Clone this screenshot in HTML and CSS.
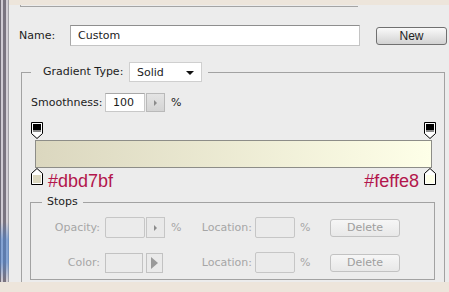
FILE: index.html
```html
<!DOCTYPE html>
<html lang="en">
<head>
  <meta charset="UTF-8">
  <title>Gradient Editor</title>
  <link rel="stylesheet" href="styles.css">
</head>
<body>
  <div class="window">
    <div class="strip"></div>
    <div class="panel">
      <div class="prev-group"></div>

      <div class="name-row">
        <label class="name-label">Name:</label>
        <input class="name-input" type="text" value="Custom">
        <button class="btn btn-new" type="button">New</button>
      </div>

      <fieldset class="group gradient-group">
        <legend class="type-legend">
          <span class="type-label">Gradient Type:</span>
          <div class="select">Solid<span class="caret"></span></div>
        </legend>

        <div class="smooth-row">
          <span class="smooth-label">Smoothness:</span>
          <input class="field" type="text" value="100">
          <span class="spin"><span class="spin-arrow"></span></span>
          <span class="pct">%</span>
        </div>

        <div class="editor">
          <div class="stops-top">
            <svg class="marker" width="12" height="17" viewBox="0 0 12 17">
              <path d="M0.5 0.5H11.5V11.5L6 16.5L0.5 11.5Z" fill="#fff" stroke="#000"/>
              <rect x="2" y="2" width="8" height="6" fill="#000"/>
              <rect x="2" y="8" width="8" height="2" fill="#8a8a8a"/>
            </svg>
            <svg class="marker" width="12" height="17" viewBox="0 0 12 17">
              <path d="M0.5 0.5H11.5V11.5L6 16.5L0.5 11.5Z" fill="#fff" stroke="#000"/>
              <rect x="2" y="2" width="8" height="6" fill="#000"/>
              <rect x="2" y="8" width="8" height="2" fill="#8a8a8a"/>
            </svg>
          </div>
          <div class="bar"></div>
          <div class="stops-bottom">
            <svg class="marker" width="12" height="17" viewBox="0 0 12 17">
              <path d="M6 0.5L11.5 5.5V16.5H0.5V5.5Z" fill="#fff" stroke="#000"/>
              <rect x="2" y="7" width="8" height="8" fill="#dbd7bf"/>
            </svg>
            <span class="hex">#dbd7bf</span>
            <span class="hex hex-right">#feffe8</span>
            <svg class="marker" width="12" height="17" viewBox="0 0 12 17">
              <path d="M6 0.5L11.5 5.5V16.5H0.5V5.5Z" fill="#fff" stroke="#000"/>
              <rect x="2" y="7" width="8" height="8" fill="#feffe8"/>
            </svg>
          </div>
        </div>

        <fieldset class="group stops-group">
          <legend class="stops-legend">Stops</legend>
          <div class="stop-row">
            <span class="off-label">Opacity:</span>
            <span class="combo">
              <span class="field off-field"></span>
              <span class="spin off-spin"><span class="spin-arrow"></span></span>
            </span>
            <span class="off-pct">%</span>
            <span class="off-label loc-label">Location:</span>
            <span class="field off-field"></span>
            <span class="off-pct">%</span>
            <span class="btn btn-off">Delete</span>
          </div>
          <div class="stop-row">
            <span class="off-label">Color:</span>
            <span class="combo">
              <span class="swatch"></span>
              <span class="color-arrow"><span class="arrow-tri"></span></span>
            </span>
            <span></span>
            <span class="off-label loc-label">Location:</span>
            <span class="field off-field"></span>
            <span class="off-pct">%</span>
            <span class="btn btn-off">Delete</span>
          </div>
        </fieldset>
      </fieldset>
    </div>
  </div>
</body>
</html>
```

FILE: styles.css
```css
* {
  margin: 0;
  padding: 0;
  box-sizing: border-box;
}

body {
  background-color: #ede5db;
  font-family: 'DejaVu Sans', sans-serif;
  font-size: 11px;
  line-height: 14px;
  color: #1c1c1c;
  overflow: hidden;
}

.window {
  display: flex;
  height: 282px;
}

.strip {
  width: 9px;
  background:
    linear-gradient(to bottom, transparent 0 222px, rgba(70, 130, 210, 0.55) 240px, rgba(70, 130, 210, 0.55) 262px, transparent 280px),
    linear-gradient(to right, #6f6a75 0 1px, #cfcad3 1px 3px, #7a7480 3px 6px, #d3cfd6 6px 8px, #a2a0a6 8px 9px);
}

.panel {
  flex: 1;
  margin-top: 5px;
  background-color: #ececec;
  overflow: hidden;
}

.prev-group {
  margin-left: 11px;
  width: 338px;
  height: 2px;
  border-bottom: 1px solid #a4a4a4;
  border-left: 1px solid #a4a4a4;
}

/* name row */
.name-row {
  display: flex;
  align-items: center;
  margin-top: 18px;
  padding-left: 10px;
  height: 21px;
}

.name-label {
  width: 51px;
}

.name-input {
  width: 290px;
  height: 21px;
  padding-left: 7px;
  font: inherit;
  color: #1c1c1c;
  background: #fff;
  border: 1px solid #c4c4c4;
  border-top-color: #8e8e8e;
  border-left-color: #a8a8a8;
  outline: none;
}

.btn {
  display: flex;
  align-items: center;
  justify-content: center;
  border-radius: 3px;
  font-family: 'Liberation Sans', sans-serif;
  font-size: 12px;
}

.btn-new {
  margin-left: 16px;
  width: 71px;
  height: 18px;
  color: #222;
  border: 1px solid #707070;
  background: linear-gradient(#fafafa, #e4e4e4 55%, #d2d2d2);
}

/* groups */
.group {
  border: 1px solid #a2a2a2;
  min-width: 0;
}

.gradient-group {
  margin: 16px 4px 0 12px;
  padding: 0 8px 20px 9px;
}

.type-legend {
  display: flex;
  align-items: center;
  padding: 0 6px 0 12px;
}

.type-label {
  width: 86px;
}

.select {
  position: relative;
  width: 73px;
  height: 20px;
  padding-left: 7px;
  line-height: 20px;
  background: #fff;
  border: 1px solid #cfcfcf;
}

.caret {
  position: absolute;
  right: 7px;
  top: 8px;
  border-left: 4px solid transparent;
  border-right: 4px solid transparent;
  border-top: 4px solid #111;
}

.smooth-row {
  display: flex;
  align-items: center;
  margin-top: 11px;
  height: 19px;
}

.smooth-label {
  width: 74px;
}

.field {
  display: block;
  width: 40px;
  height: 19px;
  padding-left: 7px;
  font: inherit;
  color: #1c1c1c;
  background: #fff;
  border: 1px solid #c8c8c8;
  border-top-color: #a8a8a8;
  outline: none;
}

.spin {
  display: flex;
  align-items: center;
  justify-content: center;
  margin-left: 1px;
  width: 19px;
  height: 19px;
  background: linear-gradient(#e4e4e4, #d4d4d4);
  border: 1px solid #b9b9b9;
}

.spin-arrow {
  border-top: 3px solid transparent;
  border-bottom: 3px solid transparent;
  border-left: 3px solid #8c8c8c;
}

.pct {
  margin-left: 6px;
}

/* gradient editor */
.editor {
  margin-top: 10px;
}

.stops-top,
.stops-bottom {
  display: flex;
  justify-content: space-between;
}

.marker {
  display: block;
  flex: none;
}

.bar {
  margin: 1px 4px 0 4px;
  height: 28px;
  border: 1px solid #8d8d88;
  background: linear-gradient(to right, #dbd7bf, #feffe8);
}

.stops-bottom {
  height: 23px;
}

.hex {
  margin-top: 3px;
  margin-left: 5px;
  font-family: 'Liberation Sans', sans-serif;
  font-size: 18px;
  line-height: 20px;
  color: #b3164c;
}

.hex-right {
  margin-left: auto;
  margin-right: 5px;
}

/* stops group */
.stops-group {
  margin: 4px 1px 0 -1px;
  padding: 0 0 7px 11px;
}

.stops-legend {
  padding: 0 5px;
}

.stop-row {
  display: grid;
  grid-template-columns: 63px 61px 34px 55px 40px 35px 70px;
  align-items: center;
  margin-top: 8px;
  height: 21px;
}

.stop-row + .stop-row {
  margin-top: 14px;
  height: 20px;
}

.off-label {
  text-align: right;
  padding-right: 5px;
  color: #a6a6a6;
}

.loc-label {
  padding-right: 3px;
}

.combo {
  display: flex;
  align-items: center;
}

.off-field {
  height: 21px;
  background: #ebebeb;
  border: 1px solid #c6c6c6;
  border-radius: 2px;
}

.off-spin {
  height: 21px;
  background: #e9e9e9;
  border-color: #c6c6c6;
}

.off-pct {
  padding-left: 5px;
  color: #a6a6a6;
}

.btn-off {
  height: 18px;
  color: #9e9e9e;
  border: 1px solid #c2c2c2;
  background: linear-gradient(#f6f6f6, #e8e8e8);
  font-family: 'DejaVu Sans', sans-serif;
  font-size: 11px;
}

.swatch {
  width: 38px;
  height: 20px;
  border: 1px solid #c2c2c2;
  background: #ebebeb;
}

.color-arrow {
  display: flex;
  align-items: center;
  justify-content: center;
  margin-left: 3px;
  width: 17px;
  height: 20px;
  border: 1px solid #c2c2c2;
  background: #eaeaea;
}

.arrow-tri {
  border-top: 6px solid transparent;
  border-bottom: 6px solid transparent;
  border-left: 7px solid #9a9a9a;
}
```
